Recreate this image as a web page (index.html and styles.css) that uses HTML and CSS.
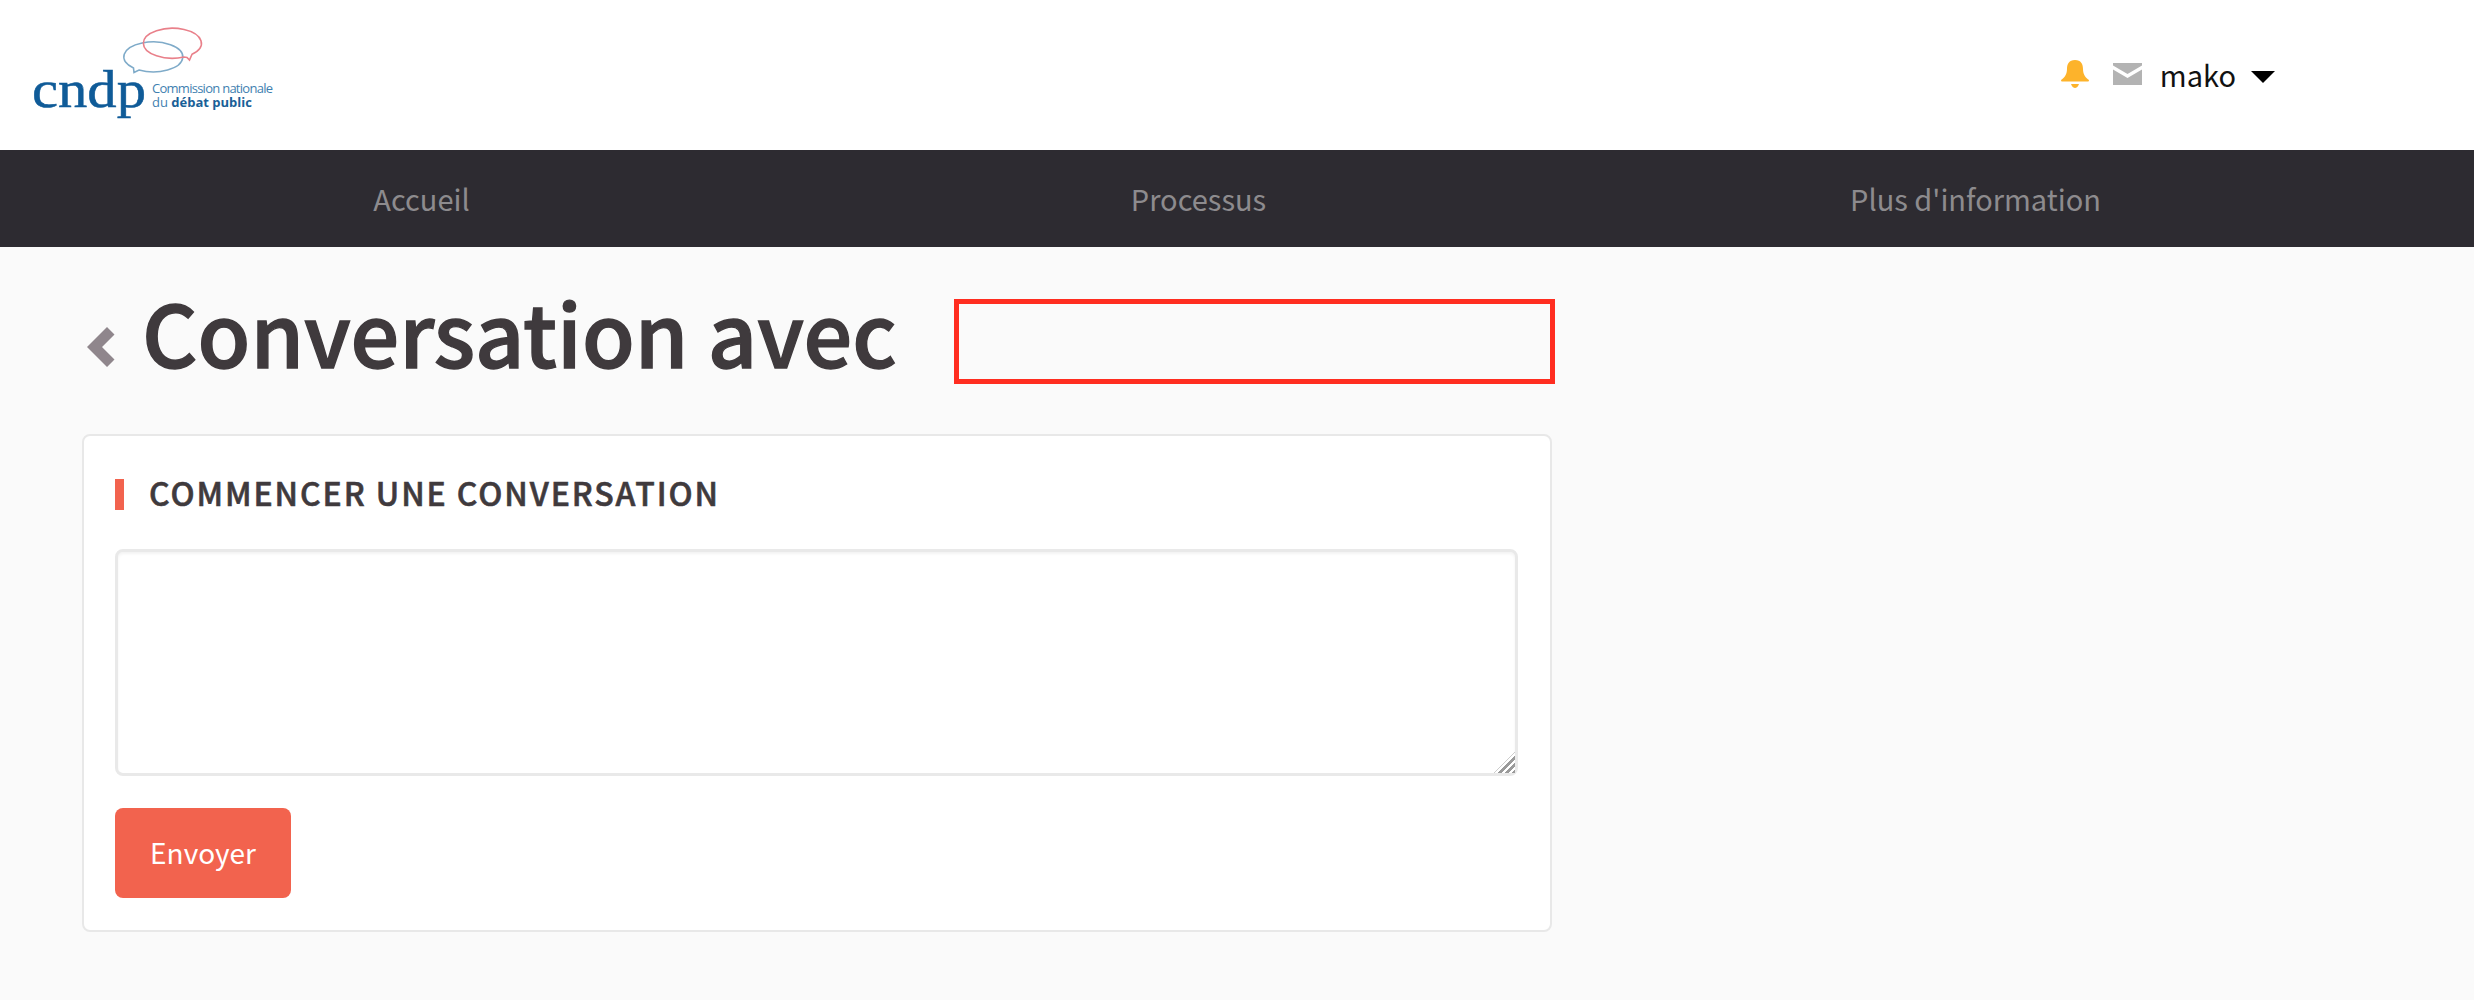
FILE: index.html
```html
<!DOCTYPE html>
<html lang="fr">
<head>
<meta charset="utf-8">
<title>Conversation</title>
<link rel="stylesheet" href="styles.css">
</head>
<body>
<header class="topbar">
  <svg class="logo" width="320" height="149" viewBox="0 0 320 149" role="img" aria-label="cndp">
    <path class="bubble-blue" d="M133.500 68 A29.500 15 0 1 1 139 70 L134 72.500 Z"/>
    <path class="bubble-red" d="M184 57 A29 15 0 1 1 192 54.300 L189.500 60 L187 57.500 Z"/>
    <text class="logo-mark" x="32" y="107" textLength="114" lengthAdjust="spacingAndGlyphs">cndp</text>
    <text class="logo-line" x="152" y="92.500" textLength="121">Commission nationale</text>
    <text class="logo-line" x="152" y="107">du <tspan class="logo-strong">débat public</tspan></text>
  </svg>
  <div class="user">
    <svg class="icon-bell" width="28" height="28" viewBox="0 0 28 28"><path d="M14 0 C8 0 6 4 6 9 C6 15 3 18 0 20 Q0 21.500 1 21.500 H27 Q28 21.500 28 20 C25 18 22 15 22 9 C22 4 20 0 14 0 Z M10 24 H18 C17 27 15 28 14 28 C13 28 11 27 10 24 Z"/></svg>
    <svg class="icon-mail" width="29" height="22" viewBox="0 0 29 22"><path d="M0 0 H29 V2.500 L14.500 11 L0 2.500 Z M0 6.500 L14.500 15 L29 6.500 V22 H0 Z"/></svg>
    <span class="username">mako</span>
    <span class="caret"></span>
  </div>
</header>
<nav class="mainnav">
  <a class="navlink">Accueil</a>
  <a class="navlink">Processus</a>
  <a class="navlink">Plus d'information</a>
</nav>
<main class="content">
  <div class="titlerow">
    <svg class="chevron" width="28" height="40" viewBox="0 0 28 40"><path d="M20 0 L27.500 7.500 L15 20 L27.500 32.500 L20 40 L0 20 Z"/></svg>
    <h1 class="pagetitle">Conversation avec</h1>
    <div class="redbox"></div>
  </div>
  <section class="card">
    <h2 class="cardtitle">COMMENCER UNE CONVERSATION</h2>
    <div class="fieldwrap">
      <textarea class="field"></textarea>
      <span class="grip"></span>
    </div>
    <button class="send" type="button">Envoyer</button>
  </section>
</main>
</body>
</html>
```
FILE: styles.css
```css
* { box-sizing: border-box; }
html, body { margin: 0; height: 100%; }
body {
  background: #fafafa;
  font-family: "Noto Sans CJK JP", "Noto Sans", sans-serif;
  color: #3f3a3d;
  overflow: hidden;
}
.topbar {
  height: 150px;
  background: #fff;
  display: flex;
  justify-content: space-between;
  align-items: flex-start;
  padding-right: 199px;
}
.logo { display: block; }
.bubble-blue, .bubble-red { fill: none; stroke-width: 1.6; }
.bubble-blue { stroke: #7fabc9; }
.bubble-red { stroke: #e9808a; }
.logo-mark {
  font-family: "Liberation Serif", serif;
  font-size: 52px;
  fill: #0f5b98;
  stroke: #0f5b98;
  stroke-width: 0.5;
}
.logo-line {
  font-family: "Open Sans", sans-serif;
  font-size: 13px;
  fill: #3f7fb0;
}
.logo-strong { font-weight: 700; fill: #1a5f97; }
.user {
  display: flex;
  align-items: center;
  height: 28px;
  margin-top: 60px;
}
.icon-bell { fill: #fdb32b; margin-right: 24px; }
.icon-mail { fill: #b3b3b3; margin-right: 18px; }
.username { font-size: 29px; line-height: 22px; color: #111; margin-right: 15px; }
.caret {
  width: 0;
  height: 0;
  margin-top: 5px;
  border-style: solid;
  border-width: 12px 12px 0;
  border-color: #000 transparent transparent;
}
.mainnav {
  height: 97px;
  background: #2d2b31;
  display: grid;
  grid-template-columns: repeat(3, 777px);
  padding-left: 33px;
  padding-bottom: 2px;
  align-items: center;
  justify-items: center;
}
.navlink { font-size: 29px; color: #8d8b8e; }
.content { padding: 0 82px; }
.titlerow {
  display: flex;
  align-items: center;
  height: 187px;
}
.chevron { fill: #8f868c; margin: 13px 27px 0 5px; }
.pagetitle {
  margin: 0 0 19px;
  font-size: 86px;
  font-weight: 500;
  -webkit-text-stroke: 1.4px #3f3a3d;
  line-height: 1;
  color: #3f3a3d;
  width: 812px;
  white-space: nowrap;
}
.redbox {
  width: 601px;
  height: 85px;
  margin-top: 2px;
  border: 5px solid #ff2d20;
}
.card {
  width: 1470px;
  height: 498px;
  background: #fff;
  border: 2px solid #e8e8e8;
  border-radius: 8px;
  padding: 43px 31px 0;
}
.cardtitle {
  margin: 0 0 39px;
  height: 31px;
  border-left: 9px solid #f2634e;
  padding-left: 25px;
  font-size: 32px;
  font-weight: 500;
  -webkit-text-stroke: 0.6px #3f3a3d;
  line-height: 26px;
  letter-spacing: 1.92px;
  color: #3f3a3d;
  white-space: nowrap;
}
.fieldwrap { position: relative; height: 227px; width: 1403px; }
.field {
  display: block;
  width: 100%;
  height: 100%;
  border: 3px solid #e9e9e9;
  border-radius: 8px;
  background: #fff;
  box-shadow: inset 0 2px 3px rgba(0, 0, 0, 0.05);
  resize: none;
  outline: none;
}
.grip {
  position: absolute;
  right: 3px;
  bottom: 3px;
  width: 21px;
  height: 21px;
  background: repeating-linear-gradient(135deg, #fff 0 2.500px, #9a9a9a 2.500px 5px);
  clip-path: polygon(100% 0, 100% 100%, 0 100%);
}
.send {
  display: block;
  margin-top: 32px;
  width: 176px;
  height: 90px;
  padding: 0 0 2px;
  background: #f2634e;
  border: 0;
  border-radius: 8px;
  color: #fff;
  font-family: inherit;
  font-size: 28px;
}
```
